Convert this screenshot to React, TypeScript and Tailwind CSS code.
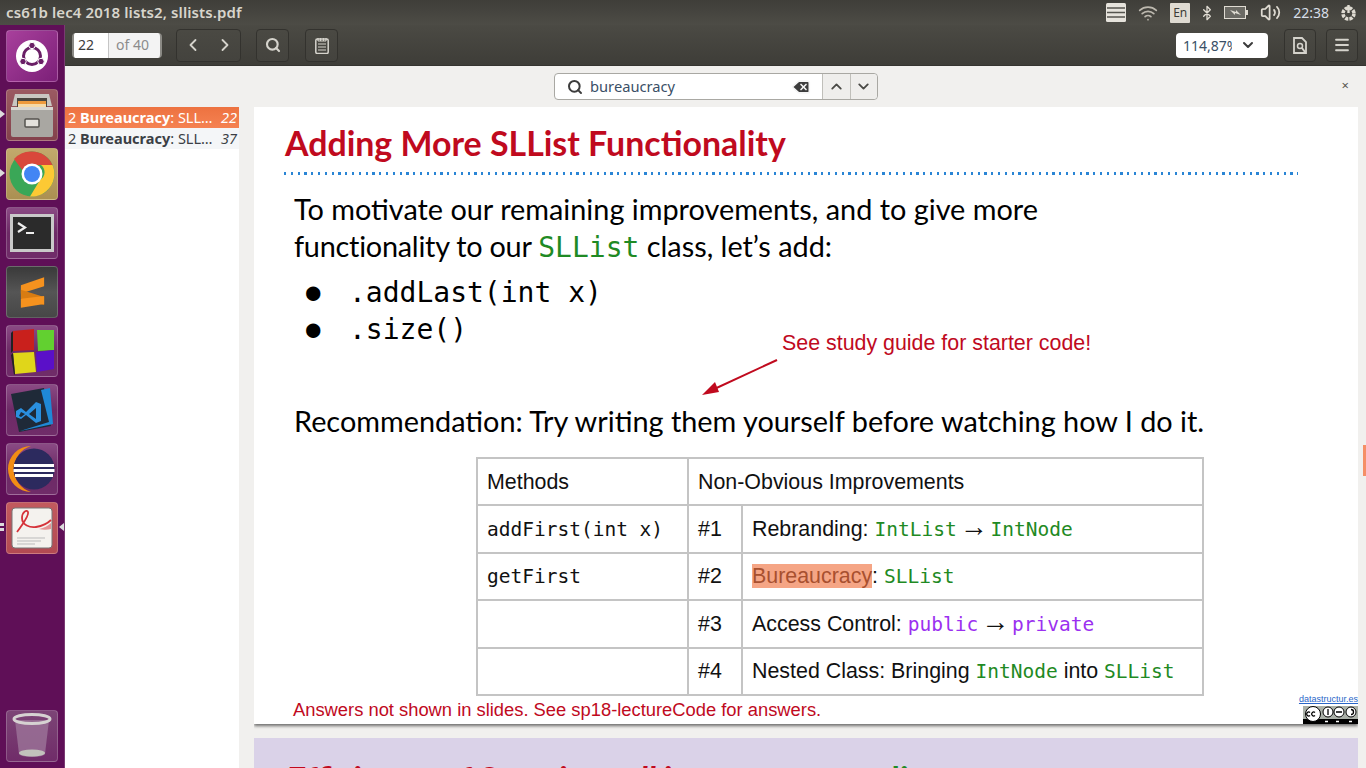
import React from 'react';
import { Bluetooth, ChevronDown, ChevronLeft, ChevronRight, ChevronUp, Delete, Menu, Search, Volume2, Wifi } from 'lucide-react';

const UI_FONT = "font-['Noto_Sans',sans-serif]";
const SLIDE_FONT = "font-['Lato',sans-serif]";
const ARIAL = "font-['Liberation_Sans',sans-serif]";
const MONO = "font-['DejaVu_Sans_Mono',monospace]";

const Tile: React.FC<{ className?: string; children: React.ReactNode }> = ({ className, children }) => (
  <div className={`w-[52px] h-[52px] rounded-[4px] border border-white/20 flex items-center justify-center overflow-hidden shrink-0 ${className ?? 'bg-linear-to-b from-[#8a4a84] via-[#6d2a66] to-[#702c69]'}`}>
    {children}
  </div>
);

const Launcher: React.FC = () => (
  <div className="relative w-[65px] shrink-0 bg-[#5f0f57] border-r border-[#7a3a72] flex flex-col gap-[7px] pl-[6px] pt-[5px] pb-[6px]">
    <Tile className="bg-linear-to-br from-[#a8409c] to-[#7c1f78]">
      <svg width="34" height="34" viewBox="0 0 34 34">
        <circle cx="17" cy="17" r="16" fill="#fff" />
        <circle cx="17" cy="17" r="8.5" fill="none" stroke="#6a1f66" strokeWidth="3" />
        <circle cx="17" cy="6.5" r="3.2" fill="#6a1f66" stroke="#fff" />
        <circle cx="8" cy="22.5" r="3.2" fill="#6a1f66" stroke="#fff" />
        <circle cx="26" cy="22.5" r="3.2" fill="#6a1f66" stroke="#fff" />
      </svg>
    </Tile>
    <Tile className="bg-linear-to-b from-[#9b5a62] to-[#84414c]">
      <svg width="44" height="46" viewBox="0 0 44 46">
        <path d="M5 2h34l3 12H2z" fill="#c9c7c2" />
        <rect x="7" y="6" width="30" height="9" fill="#4a4640" />
        <rect x="8" y="9" width="28" height="6" fill="#ee9a3c" />
        <rect x="8" y="12" width="28" height="3" fill="#f6d9a6" />
        <rect x="1" y="15" width="42" height="30" rx="2" fill="#a9a7a2" />
        <rect x="1" y="15" width="42" height="3" fill="#d8d6d1" />
        <rect x="15" y="27" width="14" height="8" rx="1" fill="#e3e1dc" stroke="#55534f" strokeWidth="1.5" />
      </svg>
    </Tile>
    <Tile className="bg-linear-to-b from-[#c2a96c] to-[#ab9052]">
      <svg width="46" height="46" viewBox="0 0 46 46">
        <circle cx="23" cy="23" r="22.5" fill="#3aa757" />
        <path d="M23 .5A22.5 22.5 0 0 1 43.5 14H23a9 9 0 0 0-9 6L5 8A22.5 22.5 0 0 1 23 .5z" fill="#d9483b" />
        <path d="M43.5 14A22.5 22.5 0 0 1 21 45.4L31 29a9 9 0 0 0 1-15z" fill="#fcc934" />
        <circle cx="23" cy="23" r="10.5" fill="#fff" />
        <circle cx="23" cy="23" r="8" fill="#4285f4" />
      </svg>
    </Tile>
    <Tile>
      <svg width="44" height="38" viewBox="0 0 44 38">
        <rect x="0" y="0" width="44" height="38" fill="#c9c9c9" />
        <rect x="3" y="3" width="38" height="32" fill="#2b2b2b" />
        <path d="M8 9l7 4.5L8 18" fill="none" stroke="#eee" strokeWidth="2.2" />
        <rect x="16" y="18" width="8" height="2" fill="#eee" />
      </svg>
    </Tile>
    <Tile className="bg-linear-to-b from-[#3a3a3a] via-[#555] to-[#474747]">
      <svg width="25" height="33" viewBox="0 0 28 34">
        <path d="M27 0v10L1 18V9z" fill="#f6921e" />
        <path d="M1 24V14l26 8v9z" fill="#d87c12" />
        <path d="M27 21v9L1 34v-10z" fill="#f6921e" />
      </svg>
    </Tile>
    <Tile>
      <svg width="46" height="48" viewBox="0 0 46 48">
        <path d="M4 4l21-2v21l-21 1z" fill="#c9201c" />
        <path d="M28 3l17 0v20l-16 1z" fill="#62d030" />
        <path d="M4 26l21-1 2 20-21 2z" fill="#e0d61a" />
        <path d="M27 25l18-2v19l-17 3z" fill="#5a10c8" />
        <path d="M4 4l-2 2v20l2-2zM4 26l-2 2 3 20 1-1z" fill="#222" />
      </svg>
    </Tile>
    <Tile>
      <svg width="44" height="46" viewBox="0 0 44 46">
        <path d="M1 7L34 1l7 38-32 6z" fill="#1f2a38" />
        <path d="M31 3l9-2 3 36-33 7 29-9z" fill="#1f88d6" />
        <path d="M6 24l5-3 5 4 10-10 5 2v17l-5 2-10-8-5 4-5-2zM11 25l-2 4 2 1 4-3zM26 21l-7 6 7 5z" fill="#2a8fdf" fillRule="evenodd" />
      </svg>
    </Tile>
    <Tile>
      <svg width="50" height="48" viewBox="0 0 50 48">
        <path d="M24 1A23 23 0 0 0 24 47 24 24 0 0 1 24 1z" fill="#f28d14" />
        <circle cx="27" cy="24" r="20.5" fill="#2c2a5e" />
        <path d="M7 19h40v3H7zM6.500 24h41v3h-41zM8 29h38v3H8z" fill="#fff" />
      </svg>
    </Tile>
    <Tile className="bg-linear-to-b from-[#c25a5e] to-[#b24a52]">
      <svg width="42" height="42" viewBox="0 0 42 42">
        <rect x="1" y="1" width="40" height="40" rx="3" fill="#f4f2ee" stroke="#777" />
        <path d="M6 25C12 17 18 8 17 5c-1-3-6 0-6 6 0 7 8 10 14 9 6-1 12-4 15-7" fill="none" stroke="#d5333a" strokeWidth="1.8" />
        <path d="M28 22c5-1 9-3 12-6v6c-4 1-8 1-12 0z" fill="#d5333a" opacity=".5" />
        <path d="M6 31h28M6 34h24M6 37h18" stroke="#bbb" strokeWidth="1" />
      </svg>
    </Tile>
    <Tile className="mt-auto bg-linear-to-b from-[#7c4476] to-[#702c69]">
      <svg width="40" height="46" viewBox="0 0 40 46">
        <path d="M3 7l4 34c2 4 24 4 26 0l4-34z" fill="#9a7196" opacity=".85" />
        <ellipse cx="20" cy="6" rx="18" ry="4.500" fill="none" stroke="#d6d2d2" strokeWidth="3" />
        <ellipse cx="20" cy="40" rx="13" ry="3.500" fill="#c2c2bc" />
      </svg>
    </Tile>
    {/* running app markers */}
    <span className="absolute left-0 top-[85px] border-y-[4px] border-l-[5px] border-y-transparent border-l-[#dcdcdc]" />
    <span className="absolute left-0 top-[144px] border-y-[4px] border-l-[5px] border-y-transparent border-l-[#dcdcdc]" />
    <span className="absolute left-0 top-[498px] w-[4px] h-[3px] bg-[#dcdcdc]" />
    <span className="absolute left-0 top-[503px] w-[4px] h-[3px] bg-[#dcdcdc]" />
    <span className="absolute right-[0px] top-[498px] border-y-[4px] border-r-[5px] border-y-transparent border-r-[#dcdcdc]" />
  </div>
);

const TopBar: React.FC = () => (
  <div className={`h-[25px] shrink-0 flex items-center bg-linear-to-b from-[#3f3e39] to-[#4d4c46] text-[#dfdbd2] ${UI_FONT}`}>
    <span className="pl-[6px] text-[15px] font-semibold text-[#d8d5cc] tracking-[0.1px]">cs61b lec4 2018 lists2, sllists.pdf</span>
    <div className="ml-auto flex items-center">
      <svg width="20" height="19" viewBox="0 0 20 19" className="mr-[12px]">
        <rect width="20" height="19" rx="1.500" fill="#e6e3dc" />
        <path d="M1 5h18M1 9.500h18M1 14h18" stroke="#55544e" strokeWidth="1.6" />
      </svg>
      <Wifi size={20} strokeWidth={2} className="mr-[12px] text-[#bdb9af]" />
      <span className="w-[20px] h-[20px] mr-[9px] rounded-[1px] bg-[#dfdbd2] text-[#3c3b37] text-[12px] flex items-center justify-center">En</span>
      <Bluetooth size={16} className="mr-[9px] text-[#dfdbd2]" />
      <svg width="24" height="13" viewBox="0 0 24 13" className="mr-[12px]">
        <rect x=".5" y=".5" width="21" height="12" fill="#6b6a64" stroke="#dfdbd2" />
        <rect x="22" y="4" width="2" height="5" fill="#dfdbd2" />
        <path d="M6 4l6 2 0-2 5 5-6-2 0 2z" fill="#dfdbd2" />
      </svg>
      <Volume2 size={21} className="mr-[12px] text-[#dfdbd2]" />
      <span className="text-[14px] text-[#d8dfe8] mr-[11px]">22:38</span>
      <svg width="17" height="18" viewBox="0 0 17 18" className="mr-[9px]">
        <circle cx="8.500" cy="9.500" r="5.500" fill="none" stroke="#dfdbd2" strokeWidth="3.500" strokeDasharray="3.200 1.100" />
        <path d="M8.500 1v8" stroke="#dfdbd2" strokeWidth="2.400" />
      </svg>
    </div>
  </div>
);

const ToolButton: React.FC<{ className?: string; children: React.ReactNode }> = ({ className, children }) => (
  <div className={`h-[33px] rounded-[4px] border border-[#33322e] bg-linear-to-b from-[#4a4943] to-[#44433e] flex items-center justify-center text-[#d5d3cc] ${className ?? ''}`}>
    {children}
  </div>
);

const Toolbar: React.FC = () => (
  <div className={`h-[41px] shrink-0 flex items-center bg-linear-to-b from-[#4b4a44] to-[#3e3d38] border-b border-[#353430] ${UI_FONT}`}>
    <div className="ml-[7px] w-[90px] h-[25px] rounded-[4px] flex bg-[#f3f3f3] text-[14px] overflow-hidden border-x-2 border-[#8b8a85]">
      <span className="w-[35px] bg-white border-r border-[#c5c5c5] pl-[4px] leading-[24px] text-[#3c3c3c]">22</span>
      <span className="pl-[7px] leading-[24px] text-[#8c8c8c]">of 40</span>
    </div>
    <ToolButton className="ml-[14px] w-[65px] gap-[12px] text-[#a5a39c]">
      <ChevronLeft size={20} strokeWidth={2.2} />
      <ChevronRight size={20} strokeWidth={2.2} />
    </ToolButton>
    <ToolButton className="ml-[15px] w-[33px]"><Search size={16} strokeWidth={3.2} /></ToolButton>
    <ToolButton className="ml-[16px] w-[33px]">
      <svg width="14" height="17" viewBox="0 0 14 17">
        <rect x=".8" y="2" width="12.400" height="14.500" rx="1.500" fill="none" stroke="#d5d3cc" strokeWidth="1.500" />
        <path d="M3 4h8M3 7h8M3 10h8M3 13h8M3 1v3M5.500 1v3M8.500 1v3M11 1v3" stroke="#d5d3cc" strokeWidth="1.200" />
      </svg>
    </ToolButton>
    <div className="ml-auto w-[92px] h-[25px] rounded-[4px] bg-white flex items-center pl-[7px] text-[14px] text-[#3a4f66]">
      <span className="w-[49px] overflow-hidden whitespace-nowrap">114,87%</span>
      <ChevronDown size={16} strokeWidth={3} className="ml-[8px] text-[#3c3c3c]" />
    </div>
    <ToolButton className="ml-[16px] w-[32px]">
      <svg width="14" height="17" viewBox="0 0 14 17">
        <path d="M1 1h8l4 4v11H1z" fill="none" stroke="#d5d3cc" strokeWidth="1.800" />
        <circle cx="7" cy="9" r="2.500" fill="none" stroke="#d5d3cc" strokeWidth="1.500" />
        <path d="M9 11l3 4" stroke="#d5d3cc" strokeWidth="2" />
      </svg>
    </ToolButton>
    <ToolButton className="ml-[10px] mr-[8px] w-[32px]"><Menu size={18} strokeWidth={2.4} /></ToolButton>
  </div>
);

const FindBar: React.FC = () => (
  <div className={`relative h-[41px] shrink-0 flex items-center ${UI_FONT}`}>
    <div className="ml-[489px] w-[324px] h-[27px] rounded-[4px] border border-[#a9a8a3] bg-white flex items-center text-[14.700px] text-[#3a4f66]">
      <Search size={16} strokeWidth={3} className="ml-[12px] mr-[7px] text-[#3c3c3c]" />
      <span>bureaucracy</span>
      <Delete size={20} fill="#3c3c3c" strokeWidth={2} className="ml-auto mr-[11px] text-[#f5f5f5]" />
      <div className="w-[55px] h-full rounded-r-[4px] bg-[#efeeec] border-l border-[#c0bfba] flex">
        <span className="flex-1 flex items-center justify-center border-r border-[#c0bfba]"><ChevronUp size={17} strokeWidth={2.6} className="text-[#4a4a46]" /></span>
        <span className="flex-1 flex items-center justify-center"><ChevronDown size={17} strokeWidth={2.6} className="text-[#4a4a46]" /></span>
      </div>
    </div>
    <span className="absolute right-[17px] top-[10px] text-[13px] text-[#55554f]">×</span>
  </div>
);

const SearchResults: React.FC = () => (
  <div className={`w-[174px] shrink-0 bg-white text-[14.500px] ${UI_FONT}`}>
    <div className="h-[21px] flex items-center pl-[3px] pr-[2px] bg-linear-to-b from-[#ed7240] to-[#f58252] text-white">
      <span className="whitespace-nowrap">2 <b>Bureaucracy</b>: SLL…</span>
      <i className="ml-auto">22</i>
    </div>
    <div className="h-[21px] flex items-center pl-[3px] pr-[2px] bg-[#f4f6f8] text-[#3b3f45]">
      <span className="whitespace-nowrap">2 <b>Bureaucracy</b>: SLL…</span>
      <i className="ml-auto">37</i>
    </div>
  </div>
);

const Code: React.FC<{ className?: string; children: React.ReactNode }> = ({ className, children }) => (
  <span className={`${MONO} text-[19.5px] ${className ?? 'text-[#1f8a24]'}`}>{children}</span>
);

const Arrow: React.FC = () => <span className="text-[28px] leading-none mx-[-3px]">→</span>;

const CcBadge: React.FC = () => (
  <div className="absolute right-0 bottom-0 flex flex-col items-end">
    <span className={`${ARIAL} text-[9px] leading-[11px] text-[#2a66c8] underline`}>datastructur.es</span>
    <svg width="55" height="18" viewBox="0 0 55 18" className="mt-[1px]">
      <rect width="55" height="18" fill="#aab0a8" />
      <rect y="13" width="55" height="5" fill="#000" />
      <circle cx="10" cy="8" r="7.500" fill="#fff" stroke="#000" />
      <circle cx="25" cy="6" r="5" fill="#fff" stroke="#000" />
      <circle cx="36" cy="6" r="5" fill="#fff" stroke="#000" />
      <circle cx="48" cy="6" r="5" fill="#fff" stroke="#000" />
      <path d="M7 6.500a2 2 0 1 0 0 3M12 6.500a2 2 0 1 0 0 3M25 3v6M33 6h6M48 3.500a2.500 2.500 0 1 1 0 5" fill="none" stroke="#000" strokeWidth="1.300" />
      <path d="M22 15.500h3M33 15.500h3M46 15.500h3" stroke="#fff" strokeWidth="1.500" />
    </svg>
  </div>
);

const Slide: React.FC = () => (
  <div className="relative h-[617px] bg-white shadow-[0_2px_3px_rgba(0,0,0,0.55)]">
    <h1 className={`${SLIDE_FONT} pt-[16px] pl-[31px] text-[33.900px] leading-[40px] font-bold text-[#c00a1e]`}>Adding More SLList Functionality</h1>
    <div className="mt-[9px] ml-[30px] w-[1014px] h-[3px] bg-[repeating-linear-gradient(90deg,#2a85d5_0,#2a85d5_2.200px,transparent_2.200px,transparent_6.800px)]" />

    <div className={`${SLIDE_FONT} pl-[40px] text-[28.850px] text-black`}>
      <p className="mt-[16px] leading-[36.500px]">
        To motivate our remaining improvements, and to give more<br />
        <span className="tracking-[-0.25px]">functionality to our </span><span className={`${MONO} text-[28px] text-[#1f8a24]`}>SLList</span> class, let’s add:
      </p>
      <ul className={`${MONO} mt-[8px] text-[28px] leading-[37px]`}>
        <li className="flex"><span className="w-[55px] pl-[12px] text-[24px]">●</span>.addLast(int x)</li>
        <li className="flex"><span className="w-[55px] pl-[12px] text-[24px]">●</span>.size()</li>
      </ul>
      <p className="mt-[55px] leading-[36px]">Recommendation: Try writing them yourself before watching how I do it.</p>
    </div>

    <table className={`${ARIAL} mt-[18px] ml-[222px] w-[728px] h-[239px] table-fixed border-collapse text-[21.400px] text-[#111] [&_td]:border-2 [&_td]:border-[#c4c4c4] [&_td]:pl-[9px]`}>
      <colgroup>
        <col className="w-[211px]" />
        <col className="w-[54px]" />
        <col />
      </colgroup>
      <tbody>
        <tr>
          <td>Methods</td>
          <td colSpan={2}>Non-Obvious Improvements</td>
        </tr>
        <tr>
          <td><Code className="text-[#111]">addFirst(int x)</Code></td>
          <td>#1</td>
          <td>Rebranding: <Code>IntList</Code> <Arrow /> <Code>IntNode</Code></td>
        </tr>
        <tr>
          <td><Code className="text-[#111]">getFirst</Code></td>
          <td>#2</td>
          <td><span className="bg-[#f5a585] text-[#a8502f]">Bureaucracy</span>: <Code>SLList</Code></td>
        </tr>
        <tr>
          <td />
          <td>#3</td>
          <td>Access Control: <Code className="text-[#9b30f0]">public</Code> <Arrow /> <Code className="text-[#9b30f0]">private</Code></td>
        </tr>
        <tr>
          <td />
          <td>#4</td>
          <td>Nested Class: Bringing <Code>IntNode</Code> into <Code>SLList</Code></td>
        </tr>
      </tbody>
    </table>

    <p className={`${ARIAL} mt-[2px] pl-[39px] text-[18.350px] leading-[24px] text-[#c00a1e]`}>Answers not shown in slides. See sp18-lectureCode for answers.</p>

    {/* annotation over the slide */}
    <span className={`${ARIAL} absolute left-[528px] top-[224px] text-[21.400px] leading-[24px] text-[#c00a1e]`}>See study guide for starter code!</span>
    <svg width="80" height="40" viewBox="0 0 80 40" className="absolute left-[446px] top-[251px]">
      <path d="M77 2L10 33" stroke="#c00a1e" strokeWidth="2" />
      <path d="M2 37l13-13 4 10z" fill="#c00a1e" />
    </svg>
    <CcBadge />
  </div>
);

const App: React.FC = () => (
  <div className="w-[1366px] h-[768px] overflow-hidden flex flex-col bg-[#f1f0ee]">
    <TopBar />
    <div className="flex flex-1 min-h-0">
      <Launcher />
      <div className="flex-1 min-w-0 flex flex-col">
        <Toolbar />
        <div className="relative flex-1 min-h-0 flex flex-col">
          <FindBar />
          <div className="flex flex-1 min-h-0">
            <SearchResults />
            <div className="ml-[15px] w-[1104px] overflow-hidden">
              <Slide />
              <div className="mt-[14px] h-[60px] bg-[#dad2e8] overflow-hidden pt-[21px] pl-[33px]">
                <h2 className={`${SLIDE_FONT} text-[33.900px] leading-[40px] font-bold text-[#c00a1e] whitespace-nowrap`}>
                  Efficiency of Scan in an <i>ll</i> in a row <span className="ml-[100px] text-[#1f8a24]">list</span>
                </h2>
              </div>
            </div>
          </div>
          {/* scrollbar thumb */}
          <span className="absolute right-0 top-[379px] w-[3px] h-[31px] bg-[#f58f66]" />
        </div>
      </div>
    </div>
  </div>
);

export default App;
